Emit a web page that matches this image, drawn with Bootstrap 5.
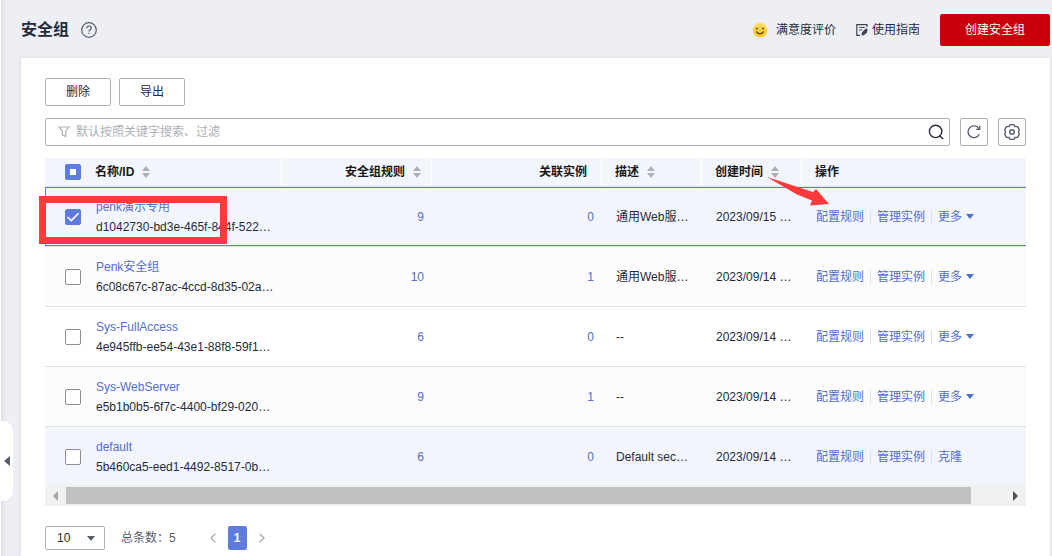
<!DOCTYPE html>
<html lang="zh-CN">
<head>
<meta charset="utf-8">
<meta name="viewport" content="width=device-width, initial-scale=1">
<title>安全组</title>
<link href="https://cdn.jsdelivr.net/npm/bootstrap@5.3.0/dist/css/bootstrap.min.css" rel="stylesheet">
<style>
  :root { --ink: #252b3a; --brand: #5e7ce0; --link: #526ecc; --line: #adb0b8; }
  body { font-family: "Liberation Sans", "Noto Sans CJK SC", sans-serif; font-size: 12px; line-height: 20px; color: var(--ink); background: #eeeff5; }
  a { color: var(--link); text-decoration: none; }
  svg { display: block; flex: none; }
  .shell { border-left: 1px solid #fff; padding: 14px 2px 0 20px; box-shadow: inset 4px 0 4px -3px #d4d6de; }
  .page-top { height: 44px; }
  .page-title { font-size: 16px; line-height: 32px; font-weight: 700; }
  .top-link { color: var(--ink); line-height: 30px; }
  .create-btn { background: #c7000b; color: #fff; border: 0; border-radius: 2px; width: 110px; height: 32px; font-size: 12px; }
  .panel { background: #fff; padding: 20px 24px 6px; box-shadow: 0 0 4px rgba(60,70,100,.12); }
  .tool-btn { width: 66px; height: 28px; border: 1px solid var(--line); border-radius: 2px; background: #fff; color: var(--ink); font-size: 12px; padding: 0; line-height: 20px; }
  .square-btn { width: 28px; height: 28px; border: 1px solid var(--line); border-radius: 2px; background: #fff; padding: 0; }
  .search-row { gap: 10px; margin: 12px 0; }
  .search-box { border: 1px solid var(--line); border-radius: 2px; height: 28px; gap: 6px; padding: 0 5px 0 12px; }
  .search-box input { border: 0; outline: 0; min-width: 0; font-size: 12px; color: var(--ink); background: transparent; padding: 0; }
  .search-box input::placeholder { color: #adb0b8; opacity: 1; }
  .bare-btn { border: 0; background: none; padding: 0; }
  .groups { table-layout: fixed; width: 100%; border-collapse: separate; border-spacing: 0; margin: 0; }
  .groups th { height: 29px; padding: 0 14px 0 13px; background: #f2f5fc; border-bottom: 1px solid #dfe1e6; font-weight: 700; color: #191919; line-height: 28px; white-space: nowrap; position: relative; }
  .groups th + th:not(:nth-child(2)):before { content: ""; display: block; position: absolute; left: -1px; top: 0; bottom: 0; width: 1px; background: #fff; }
  .groups td { height: 60px; padding: 0 8px 0 14px; border-bottom: 1px solid #dfe1e6; white-space: nowrap; vertical-align: middle; background: #fff; }
  .groups tr:nth-child(even) td { background: #fcfcfc; }
  .groups tbody tr.hovered td { background: #f2f5fc; }
  .groups tbody tr:last-child td { height: 58px; border: 0; padding-top: 2px; }
  .groups tbody tr.picked td { background: #f2f5fc; box-shadow: inset 0 1px var(--brand), inset 0 -1px var(--brand); }
  .groups tbody tr.picked td:first-child { box-shadow: inset 0 1px var(--brand), inset 0 -1px var(--brand), inset 1px 0 var(--brand); }
  .groups th:first-child, .groups td:first-child { padding-left: 20px; padding-right: 0; }
  .groups th.numeric, .groups td.numeric { text-align: right; }
  .groups th.numeric { padding-right: 15px; }
  .groups th:nth-child(3) { padding-right: 11px; }
  .col-check { width: 37px; }
  .col-name { width: 200px; }
  .col-rules { width: 150px; }
  .col-bound { width: 170px; }
  .col-short { width: 100px; }
  .form-check-input.pick { display: block; width: 16px; height: 16px; margin: 0; border: 1px solid #8a8e99; border-radius: 2px; box-shadow: none; }
  .form-check-input.pick:checked, .form-check-input.pick:indeterminate { background-color: var(--brand); border-color: var(--brand); }
  .form-check-input.pick:checked { background-image: url("data:image/svg+xml,%3csvg xmlns='http://www.w3.org/2000/svg' viewBox='0 0 14 14'%3e%3cpath fill='none' stroke='%23fff' stroke-width='1.6' d='M1.500 7l3.800 3.600L12.500 3.300'/%3e%3c/svg%3e"); }
  .form-check-input.pick:indeterminate { background-image: linear-gradient(#fff, #fff); background-size: 6px 6px; }
  .row-actions a { padding-right: 6px; }
  .row-actions a + a { border-left: 1px solid #dfe1e6; padding-left: 6px; line-height: 14px; }
  .scroll-track { background: #f1f1f1; height: 21px; padding: 2px 7px 2px 8px; }
  .scroll-rail { margin: 0 4px 0 7px; }
  .scroll-thumb { background: #c1c1c1; height: 17px; }
  .pager { margin-top: 20px; color: #575d6c; }
  .pager nav { gap: 12px; padding-left: 10px; }
  .size-select { width: 60px; height: 24px; border: 1px solid var(--line); border-radius: 2px; padding: 0 0 0 11px; font-size: 12px; line-height: 20px; color: var(--ink); background-color: #fff; background-image: url("data:image/svg+xml,%3csvg xmlns='http://www.w3.org/2000/svg' viewBox='0 0 8 5'%3e%3cpath fill='%23575d6c' d='M0 0h8L4 5z'/%3e%3c/svg%3e"); background-size: 8px 5px; background-position: right 9px center; }
  .page-now { background: var(--brand); color: #fff; border: 0; border-radius: 2px; width: 19px; height: 24px; padding: 0; font-weight: 700; }
  .fold-btn { position: absolute; left: 0; top: 421px; width: 12px; height: 80px; border: 0; padding: 0 0 0 3px; background: #fff; border-radius: 0 10px 10px 0; }
  .mark-box { position: absolute; left: -6px; top: 38px; width: 188px; height: 48px; border: 7px solid #fc3a3b; pointer-events: none; }
  .mark-arrow { position: absolute; left: 720px; top: 18px; pointer-events: none; }
</style>
</head>
<body>
<svg class="d-none">
  <symbol id="sort" viewBox="0 0 8 12"><path fill="#adb0b8" d="M4 0l4 5H0zM0 7h8l-4 5z"/></symbol>
  <symbol id="down" viewBox="0 0 8 5"><path fill="#526ecc" d="M0 0h8L4 5z"/></symbol>
</svg>
<div class="shell min-vh-100 d-flex flex-column position-relative">
  <button class="fold-btn" aria-label="展开菜单"><svg width="6" height="10" viewBox="0 0 6 10"><path fill="#575d6c" d="M6 0v10L0 5z"/></svg></button>

  <header class="page-top d-flex align-items-start">
    <h1 class="page-title m-0">安全组</h1>
    <button class="bare-btn ms-2 mt-2 ps-1" aria-label="帮助">
      <svg width="16" height="16" viewBox="0 0 16 16" fill="none" stroke="#575d6c" stroke-width="1.2"><circle cx="8" cy="8" r="7.3"/><path d="M5.700 6.300c0-1.400 1-2.300 2.300-2.300s2.300.9 2.300 2.100c0 1.600-2.300 1.700-2.300 3.400"/><path d="M8 10.700v1.400"/></svg>
    </button>
    <div class="ms-auto d-flex">
      <a href="#" class="top-link d-flex align-items-center gap-2 me-3">
        <svg width="16" height="16" viewBox="0 0 16 16"><defs><linearGradient id="sun" x2="0" y2="1"><stop stop-color="#ffe36b"/><stop offset="1" stop-color="#fbbf0c"/></linearGradient></defs><circle cx="8" cy="8" r="7.200" fill="url(#sun)"/><circle cx="5" cy="6.500" r=".9" fill="#453a2c"/><circle cx="11" cy="6.500" r=".9" fill="#453a2c"/><path d="M4.400 9.400c1.400 3 5.800 3 7.200 0" fill="none" stroke="#453a2c" stroke-width="1.200"/></svg>
        满意度评价</a>
      <a href="#" class="top-link d-flex align-items-center gap-1 me-3 ps-1 pe-1">
        <svg width="12" height="12" viewBox="0 0 12 12" fill="none" stroke="#3c4355" stroke-width="1.2"><path d="M11 3V.7H.8v10.600H4M3.200 3.500h5.500M3.200 6h3"/><path d="M5.400 11.500l.5-3L10 4.200l1.700 1.200-1 3.600-3 2.200z" fill="#3c4355" stroke="none"/></svg>
        使用指南</a>
      <button class="create-btn">创建安全组</button>
    </div>
  </header>

  <main class="panel flex-grow-1">
    <div class="d-flex gap-2">
      <button class="tool-btn">删除</button>
      <button class="tool-btn">导出</button>
    </div>

    <div class="search-row d-flex">
      <div class="search-box d-flex align-items-center flex-grow-1">
        <svg width="12" height="12" viewBox="0 0 12 12" fill="none" stroke="#adb0b8" stroke-width="1.200"><path d="M1 1h10L7.800 5v5.300L4.400 9V5z"/></svg>
        <input class="flex-grow-1" type="text" placeholder="默认按照关键字搜索、过滤" aria-label="搜索">
        <button class="bare-btn" aria-label="查询"><svg width="16" height="16" viewBox="0 0 16 16" fill="none" stroke="#252b3a" stroke-width="1.400"><circle cx="7.600" cy="7.400" r="6.200"/><path d="M11.400 11.400l3.700 3.700"/></svg></button>
      </div>
      <button class="square-btn d-flex align-items-center justify-content-center" aria-label="刷新"><svg width="14" height="14" viewBox="0 0 14 14" fill="none" stroke="#575d6c" stroke-width="1.300"><path d="M12.300 9.200A5.900 5.900 0 1 1 12 3.800"/><path d="M12.700.7v3.600H9.200"/></svg></button>
      <button class="square-btn d-flex align-items-center justify-content-center" aria-label="设置"><svg width="18" height="18" viewBox="0 0 18 18" fill="none" stroke="#575d6c" stroke-width="1.400" stroke-linejoin="round"><path d="M7.200 1.600h3.600l1.300 1.900 2.400.1 1.900 3.200L15.400 9l1 2.200-1.900 3.200-2.400.1-1.300 1.900H7.200l-1.300-1.900-2.400-.1-1.900-3.200L2.600 9l-1-2.200 1.900-3.200 2.400-.1z"/><circle cx="9" cy="9" r="2.300"/></svg></button>
    </div>

    <div class="position-relative">
      <table class="groups">
        <colgroup><col class="col-check"><col class="col-name"><col class="col-rules"><col class="col-bound"><col class="col-short"><col class="col-short"><col></colgroup>
        <thead>
          <tr>
            <th><input class="form-check-input pick" id="all" type="checkbox" aria-label="全选"></th>
            <th><div class="d-flex align-items-center gap-2">名称/ID<svg width="8" height="12"><use href="#sort"/></svg></div></th>
            <th><div class="d-flex align-items-center justify-content-end gap-2">安全组规则<svg width="8" height="12"><use href="#sort"/></svg></div></th>
            <th class="numeric">关联实例</th>
            <th><div class="d-flex align-items-center gap-2">描述<svg width="8" height="12"><use href="#sort"/></svg></div></th>
            <th><div class="d-flex align-items-center gap-2">创建时间<svg width="8" height="12"><use href="#sort"/></svg></div></th>
            <th>操作</th>
          </tr>
        </thead>
        <tbody>
          <tr class="picked">
            <td><input class="form-check-input pick" type="checkbox" checked aria-label="penk演示专用"></td>
            <td><a href="#">penk演示专用</a><br>d1042730-bd3e-465f-844f-522…</td>
            <td class="numeric"><a href="#">9</a></td><td class="numeric"><a href="#">0</a></td>
            <td>通用Web服…</td><td>2023/09/15 …</td>
            <td><div class="row-actions d-flex align-items-center"><a href="#">配置规则</a><a href="#">管理实例</a><a href="#" class="d-flex align-items-center gap-1">更多<svg width="8" height="5"><use href="#down"/></svg></a></div></td>
          </tr>
          <tr>
            <td><input class="form-check-input pick" type="checkbox" aria-label="Penk安全组"></td>
            <td><a href="#">Penk安全组</a><br>6c08c67c-87ac-4ccd-8d35-02a…</td>
            <td class="numeric"><a href="#">10</a></td><td class="numeric"><a href="#">1</a></td>
            <td>通用Web服…</td><td>2023/09/14 …</td>
            <td><div class="row-actions d-flex align-items-center"><a href="#">配置规则</a><a href="#">管理实例</a><a href="#" class="d-flex align-items-center gap-1">更多<svg width="8" height="5"><use href="#down"/></svg></a></div></td>
          </tr>
          <tr>
            <td><input class="form-check-input pick" type="checkbox" aria-label="Sys-FullAccess"></td>
            <td><a href="#">Sys-FullAccess</a><br>4e945ffb-ee54-43e1-88f8-59f1…</td>
            <td class="numeric"><a href="#">6</a></td><td class="numeric"><a href="#">0</a></td>
            <td>--</td><td>2023/09/14 …</td>
            <td><div class="row-actions d-flex align-items-center"><a href="#">配置规则</a><a href="#">管理实例</a><a href="#" class="d-flex align-items-center gap-1">更多<svg width="8" height="5"><use href="#down"/></svg></a></div></td>
          </tr>
          <tr>
            <td><input class="form-check-input pick" type="checkbox" aria-label="Sys-WebServer"></td>
            <td><a href="#">Sys-WebServer</a><br>e5b1b0b5-6f7c-4400-bf29-020…</td>
            <td class="numeric"><a href="#">9</a></td><td class="numeric"><a href="#">1</a></td>
            <td>--</td><td>2023/09/14 …</td>
            <td><div class="row-actions d-flex align-items-center"><a href="#">配置规则</a><a href="#">管理实例</a><a href="#" class="d-flex align-items-center gap-1">更多<svg width="8" height="5"><use href="#down"/></svg></a></div></td>
          </tr>
          <tr class="hovered">
            <td><input class="form-check-input pick" type="checkbox" aria-label="default"></td>
            <td><a href="#">default</a><br>5b460ca5-eed1-4492-8517-0b…</td>
            <td class="numeric"><a href="#">6</a></td><td class="numeric"><a href="#">0</a></td>
            <td>Default sec…</td><td>2023/09/14 …</td>
            <td><div class="row-actions d-flex align-items-center"><a href="#">配置规则</a><a href="#">管理实例</a><a href="#">克隆</a></div></td>
          </tr>
        </tbody>
      </table>
      <div class="scroll-track d-flex align-items-center">
        <svg width="6" height="10" viewBox="0 0 6 10"><path fill="#a3a3a3" d="M5 0v10L0 5z"/></svg>
        <div class="scroll-rail flex-grow-1"><div class="scroll-thumb" style="width:96%"></div></div>
        <svg width="6" height="10" viewBox="0 0 6 10"><path fill="#505050" d="M0 0v10l5-5z"/></svg>
      </div>
      <div class="mark-box"></div>
      <svg class="mark-arrow" width="66" height="32" viewBox="0 0 66 32"><path fill="#fc3a3b" d="M2 1l46 15 3-3 13 15-19 1.500 2-5-15-6z"/></svg>
    </div>

    <div class="pager d-flex align-items-center">
      <select class="form-select size-select" aria-label="每页条数"><option>10</option></select>
      <span class="ms-3">总条数：5</span>
      <nav class="d-flex align-items-center ms-4" aria-label="分页">
        <button class="bare-btn" aria-label="上一页"><svg width="6" height="10" viewBox="0 0 6 10" fill="none" stroke="#adb0b8" stroke-width="1.500"><path d="M5.300.7L1 5l4.300 4.300"/></svg></button>
        <button class="page-now">1</button>
        <button class="bare-btn" aria-label="下一页"><svg width="6" height="10" viewBox="0 0 6 10" fill="none" stroke="#adb0b8" stroke-width="1.500"><path d="M.7.7L5 5 .7 9.300"/></svg></button>
      </nav>
    </div>
  </main>
</div>
<script src="https://cdn.jsdelivr.net/npm/bootstrap@5.3.0/dist/js/bootstrap.bundle.min.js"></script>
<script>document.getElementById("all").indeterminate = true;</script>
</body>
</html>
